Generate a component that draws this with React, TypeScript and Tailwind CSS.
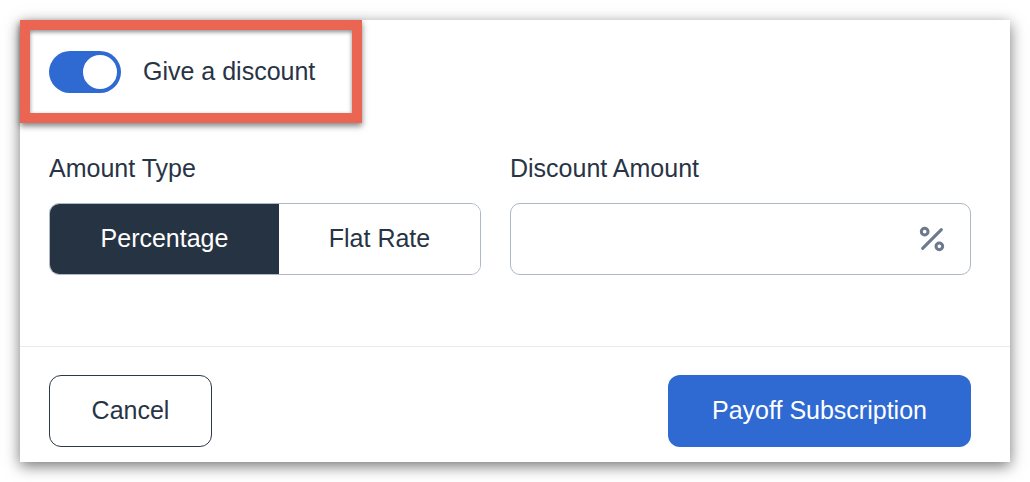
import { useState } from "react";

const Toggle = ({ on, onChange }: { on: boolean; onChange: () => void }) => {
  return (
    <button
      onClick={onChange}
      className={`flex h-[42px] w-[72px] items-center rounded-full px-[2px] ${
        on ? "justify-end bg-[#2f6ad3]" : "justify-start bg-gray-300"
      }`}
    >
      <span className="block h-[38px] w-[38px] rounded-full border-2 border-[#2f6ad3] bg-white"></span>
    </button>
  );
};

const PercentIcon = () => (
  <svg
    width="32"
    height="32"
    viewBox="0 0 24 24"
    fill="none"
    stroke="#6b7a8c"
    strokeWidth="2.3"
    strokeLinecap="round"
  >
    <line x1="19" y1="5" x2="5" y2="19" />
    <circle cx="6.5" cy="6.5" r="2.5" />
    <circle cx="17.5" cy="17.5" r="2.5" />
  </svg>
);

const App = () => {
  const [discount, setDiscount] = useState(true);
  const [type, setType] = useState<"percentage" | "flat">("percentage");

  return (
    <div className="h-[482px] w-[1030px] bg-white pl-[20px] pt-[20px] font-['Liberation_Sans',Arial,sans-serif] text-[25px] text-[#283445]">
      <div className="flex h-[442px] w-[990px] flex-col bg-white shadow-[0_4px_14px_rgba(0,0,0,0.55)]">
        {/* top */}
        <div className="flex flex-col pl-[29px] pr-[39px]">
          <div className="-ml-[29px] flex h-[103px] w-[342px] items-center border-[10px] border-[#ea6552] pl-[19px] shadow-[0_3px_6px_rgba(0,0,0,0.5),inset_0_2px_4px_rgba(0,0,0,0.45)]">
            <Toggle on={discount} onChange={() => setDiscount(!discount)} />
            <span className="ml-[22px] leading-none">Give a discount</span>
          </div>

          <div className="mt-[31px] flex gap-[29px]">
            <div className="flex w-[432px] flex-col">
              <label className="leading-[29px]">Amount Type</label>
              <div className="mt-[20px] flex h-[72px] overflow-hidden rounded-[10px] border border-[#aeb8c4]">
                <button
                  onClick={() => setType("percentage")}
                  className={`w-[229px] ${
                    type === "percentage"
                      ? "bg-[#263342] text-white"
                      : "bg-white text-[#283445]"
                  }`}
                >
                  Percentage
                </button>
                <button
                  onClick={() => setType("flat")}
                  className={`flex-1 ${
                    type === "flat"
                      ? "bg-[#263342] text-white"
                      : "bg-white text-[#283445]"
                  }`}
                >
                  Flat Rate
                </button>
              </div>
            </div>
            <div className="flex w-[461px] flex-col">
              <label className="leading-[29px]">Discount Amount</label>
              <div className="mt-[20px] flex h-[72px] items-center rounded-[10px] border border-[#aeb8c4] pl-4 pr-[22px]">
                <input
                  type="text"
                  className="h-full min-w-0 flex-1 bg-transparent outline-none"
                />
                <PercentIcon />
              </div>
            </div>
          </div>
        </div>

        <div className="mt-[71px] border-t border-[#e9ebf1]"></div>

        {/* footer */}
        <div className="flex justify-between pl-[29px] pr-[39px] pt-[28px]">
          <button className="h-[72px] w-[163px] rounded-[12px] border border-[#2d3848] bg-white">
            Cancel
          </button>
          <button className="h-[72px] w-[303px] rounded-[12px] bg-[#2f6ad3] text-white">
            Payoff Subscription
          </button>
        </div>
      </div>
    </div>
  );
};

export default App;
